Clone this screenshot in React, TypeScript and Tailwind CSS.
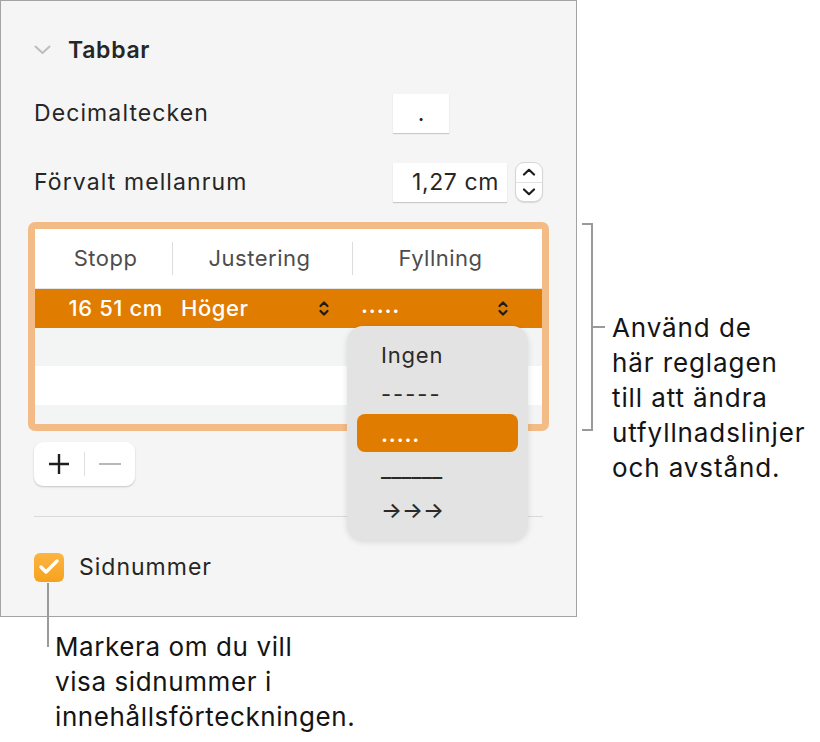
import { Check } from "lucide-react";

// Small stacked caret used in the table popup buttons
const UpDown = ({ color = "#1c1c1c" }: { color?: string }) => (
  <svg width="12" height="17" viewBox="0 0 12 17" fill="none">
    <path d="M2.5 6 L6 2.5 L9.5 6" stroke={color} strokeWidth="2.2" strokeLinecap="round" strokeLinejoin="round" />
    <path d="M2.5 11 L6 14.5 L9.5 11" stroke={color} strokeWidth="2.2" strokeLinecap="round" strokeLinejoin="round" />
  </svg>
);

const Stepper = () => (
  <div className="ml-[8px] flex h-[40px] w-[28px] flex-col overflow-hidden rounded-[9px] border border-[#d6d6d6] bg-white shadow-[0_1px_1px_rgba(0,0,0,0.12)]">
    <div className="flex flex-1 items-center justify-center border-b border-[#e2e2e2]">
      <svg width="14" height="8" viewBox="0 0 14 8" fill="none">
        <path d="M2 6.5 L7 1.8 L12 6.5" stroke="#1c1c1c" strokeWidth="2.2" strokeLinecap="round" strokeLinejoin="round" />
      </svg>
    </div>
    <div className="flex flex-1 items-center justify-center">
      <svg width="14" height="8" viewBox="0 0 14 8" fill="none">
        <path d="M2 1.5 L7 6.2 L12 1.5" stroke="#1c1c1c" strokeWidth="2.2" strokeLinecap="round" strokeLinejoin="round" />
      </svg>
    </div>
  </div>
);

const MENU_ITEMS = ["Ingen", "-----", ".....", "______", "→→→"];

const App = () => {
  return (
    <div className="relative h-[742px] w-[820px] overflow-hidden bg-white font-['Inter',sans-serif] text-[#262626]">
      <div className="flex">
        {/* Inspector panel */}
        <div className="relative flex h-[617px] w-[577px] shrink-0 flex-col border border-[#a3a3a3] bg-[#f5f5f5] px-[33px]">
          {/* Section header */}
          <div className="mt-[29px] flex h-[40px] items-center">
            <svg width="17" height="10" viewBox="0 0 17 10" fill="none">
              <path d="M1.5 1.5 L8.5 8 L15.5 1.5" stroke="#bdbdbd" strokeWidth="2" strokeLinecap="round" strokeLinejoin="round" />
            </svg>
            <span className="ml-[17px] text-[23px] font-semibold tracking-[0.7px] text-[#262626]">Tabbar</span>
          </div>

          {/* Decimal sign */}
          <div className="mt-[23px] flex h-[40px] items-center">
            <span className="w-[359px] text-[23px] tracking-[1.1px]">Decimaltecken</span>
            <div className="flex h-[39px] w-[56px] items-center justify-center bg-white text-[23px] shadow-[0_1px_1px_rgba(0,0,0,0.18)]">
              .
            </div>
          </div>

          {/* Default spacing */}
          <div className="mt-[29px] flex h-[40px] items-center">
            <span className="w-[359px] text-[23px] tracking-[1.1px]">Förvalt mellanrum</span>
            <div className="flex h-[39px] w-[114px] items-center justify-end bg-white pr-[8px] text-[23px] tracking-[0.6px] shadow-[0_1px_1px_rgba(0,0,0,0.18)]">
              1,27 cm
            </div>
            <Stepper />
          </div>

          {/* Tab stops table with focus ring */}
          <div className="mt-[20px] -mx-[6px] overflow-hidden rounded-[7px] border-[7px] border-[#f3bb86] bg-white">
            <div className="flex h-[60px] items-center border-b border-[#e4e4e4] text-[22px] tracking-[0.5px] text-[#4d4d4d]">
              <div className="flex w-[137px] justify-center pl-[4px]">Stopp</div>
              <div className="h-[33px] w-px bg-[#dcdcdc]" />
              <div className="flex w-[179px] justify-center pr-[6px]">Justering</div>
              <div className="h-[33px] w-px bg-[#dcdcdc]" />
              <div className="flex w-[189px] justify-center pr-[14px]">Fyllning</div>
            </div>
            <div className="flex h-[39px] items-center bg-[#e07c00] text-[22px] font-medium tracking-[0.6px] text-white">
              <div className="flex w-[137px] justify-end pr-[9px]">16 51 cm</div>
              <div className="flex w-[180px] items-center justify-between pl-[9px] pr-[22px]">
                <span>Höger</span>
                <UpDown />
              </div>
              <div className="flex w-[190px] items-center justify-between pl-[9px] pr-[33px]">
                <span className="-mt-[6px] font-semibold tracking-[0.8px]">.....</span>
                <UpDown />
              </div>
            </div>
            <div className="h-[38px] bg-[#f3f4f4]" />
            <div className="h-[39px] bg-white" />
            <div className="h-[19px] bg-[#f3f4f4]" />
          </div>

          {/* Add / remove */}
          <div className="mt-[11px] flex h-[44px] w-[101px] items-center rounded-[9px] bg-white shadow-[0_1px_2px_rgba(0,0,0,0.2)]">
            <div className="flex w-[50px] justify-center">
              <svg width="22" height="22" viewBox="0 0 22 22">
                <path d="M11 1 V21 M1 11 H21" stroke="#1f1f1f" strokeWidth="2.4" />
              </svg>
            </div>
            <div className="h-[24px] w-px bg-[#dedede]" />
            <div className="flex flex-1 justify-center">
              <div className="h-[2px] w-[22px] bg-[#b8b8b8]" />
            </div>
          </div>

          <div className="mt-[30px] h-px bg-[#dadada]" />

          {/* Page numbers checkbox */}
          <div className="mt-[35px] flex h-[30px] items-center">
            <div className="flex h-[29px] w-[30px] items-center justify-center rounded-[6px] bg-gradient-to-b from-[#fcb540] to-[#f6a21a]">
              <Check className="h-[24px] w-[24px] text-white" strokeWidth={3.5} />
            </div>
            <span className="ml-[15px] text-[23px] tracking-[1px]">Sidnummer</span>
          </div>

          {/* Fill popup menu */}
          <div className="absolute left-[346px] top-[325px] flex h-[214px] w-[181px] flex-col rounded-[16px] bg-[#e3e3e3] px-[10px] py-[10px] shadow-[0_2px_6px_rgba(0,0,0,0.12)]">
            {MENU_ITEMS.map((item) =>
              item === "....." ? (
                <div key={item} className="flex h-[39px] items-center rounded-[8px] bg-[#e07c00] pl-[24px] text-[22px] font-semibold text-white">
                  <span className="mt-[4px] tracking-[0.8px]">{item}</span>
                </div>
              ) : (
                <div key={item} className="flex h-[39px] items-center pl-[24px] text-[22px] text-[#2a2a2a]">
                  <span
                    className={
                      item === "-----"
                        ? "tracking-[2px]"
                        : item === "______"
                          ? "-mt-[4px] font-medium"
                          : item === "Ingen"
                            ? "tracking-[0.8px]"
                            : "font-medium"
                    }
                  >
                    {item}
                  </span>
                </div>
              ),
            )}
          </div>
        </div>

        {/* Right callout */}
        <div className="ml-[5px] mt-[223px] flex items-start">
          <div className="h-[208px] w-[11px] shrink-0 border-y-2 border-r-2 border-[#9a9a9a]" />
          <div className="mt-[87px] flex items-start">
            <div className="mt-[16px] h-[2px] w-[12px] bg-[#9a9a9a]" />
            <p className="ml-[7px] text-[26px] leading-[35px] tracking-[0.9px] text-[#141414]">
              Använd de
              <br />
              här reglagen
              <br />
              till att ändra
              <br />
              utfyllnadslinjer
              <br />
              och avstånd.
            </p>
          </div>
        </div>
      </div>

      {/* Bottom callout */}
      <div className="absolute left-[47px] top-[583px] h-[64px] w-[2px] bg-[#9a9a9a]" />
      <p className="ml-[55px] mt-[12px] text-[26px] leading-[35px] tracking-[0.6px] text-[#141414]">
        Markera om du vill
        <br />
        visa sidnummer i
        <br />
        innehållsförteckningen.
      </p>
    </div>
  );
};

export default App;
